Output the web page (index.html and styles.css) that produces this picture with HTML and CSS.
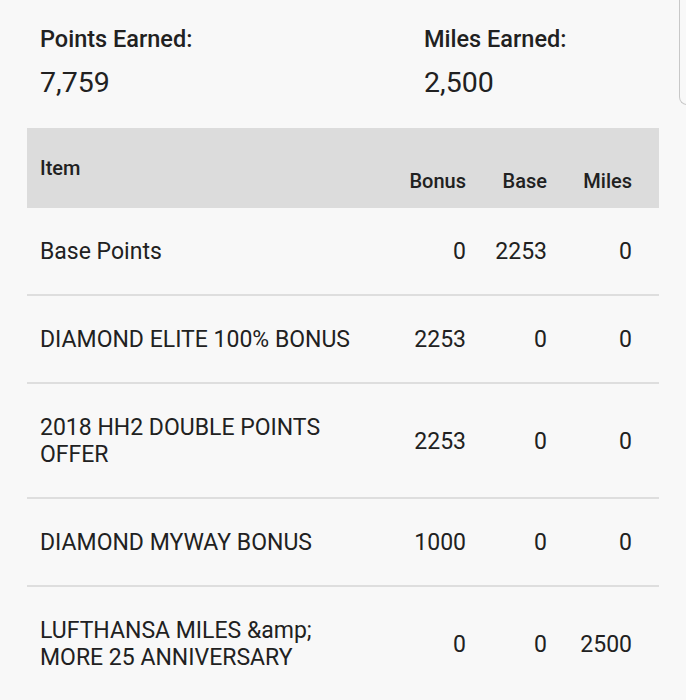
FILE: index.html
```html
<!DOCTYPE html>
<html>
<head>
<meta charset="utf-8">
<link rel="stylesheet" href="styles.css">
</head>
<body>
<div class="page">
  <div class="summary">
    <div class="stat">
      <div class="stat-label">Points Earned:</div>
      <div class="stat-value">7,759</div>
    </div>
    <div class="stat">
      <div class="stat-label">Miles Earned:</div>
      <div class="stat-value">2,500</div>
    </div>
  </div>
  <div class="table">
    <div class="row head">
      <div class="cell item">Item</div>
      <div class="cell num">Bonus</div>
      <div class="cell num">Base</div>
      <div class="cell num">Miles</div>
    </div>
    <div class="row">
      <div class="cell item">Base Points</div>
      <div class="cell num">0</div>
      <div class="cell num">2253</div>
      <div class="cell num">0</div>
    </div>
    <div class="row">
      <div class="cell item">DIAMOND ELITE 100% BONUS</div>
      <div class="cell num">2253</div>
      <div class="cell num">0</div>
      <div class="cell num">0</div>
    </div>
    <div class="row">
      <div class="cell item">2018 HH2 DOUBLE POINTS OFFER</div>
      <div class="cell num">2253</div>
      <div class="cell num">0</div>
      <div class="cell num">0</div>
    </div>
    <div class="row">
      <div class="cell item">DIAMOND MYWAY BONUS</div>
      <div class="cell num">1000</div>
      <div class="cell num">0</div>
      <div class="cell num">0</div>
    </div>
    <div class="row last">
      <div class="cell item">LUFTHANSA MILES &amp;amp; MORE 25 ANNIVERSARY</div>
      <div class="cell num">0</div>
      <div class="cell num">0</div>
      <div class="cell num">2500</div>
    </div>
  </div>
  <div class="scroll-indicator"></div>
</div>
</body>
</html>
```
FILE: styles.css
```css
html, body {
  margin: 0;
  padding: 0;
  background: #f8f8f8;
}
body {
  font-family: Roboto, "Noto Sans", sans-serif;
  color: #212121;
}
.page {
  position: relative;
  width: 686px;
  height: 700px;
  overflow: hidden;
}
.summary {
  display: grid;
  grid-template-columns: 384px 1fr;
  padding: 25px 0 0 40px;
}
.stat-label {
  font-size: 23.5px;
  font-weight: 500;
  line-height: 28px;
}
.stat-value {
  font-size: 28.5px;
  line-height: 34px;
  margin-top: 13px;
}
.table {
  margin: 28px 27px 0 27px;
}
.row {
  display: grid;
  grid-template-columns: 330px 96px 81px 85px;
  padding: 0 27px 0 13px;
  border-bottom: 2px solid #dedede;
  font-size: 23px;
  line-height: 27px;
}
.row .cell {
  padding: 30px 0 29px;
  align-self: center;
}
.row .num {
  text-align: right;
}
.row.head {
  background: #dcdcdc;
  height: 80px;
  border-bottom: none;
  font-size: 20px;
  font-weight: 500;
  line-height: 24px;
}
.row.head .cell {
  padding: 0;
}
.row.head .item {
  align-self: center;
}
.row.head .num {
  align-self: end;
  padding-bottom: 15px;
}
.row.last {
  border-bottom: none;
}
.scroll-indicator {
  position: absolute;
  left: 679px;
  top: -10px;
  width: 20px;
  height: 114px;
  border-left: 1.5px solid #c8c8c8;
  border-bottom: 1.5px solid #c8c8c8;
  border-bottom-left-radius: 8px;
}
```
